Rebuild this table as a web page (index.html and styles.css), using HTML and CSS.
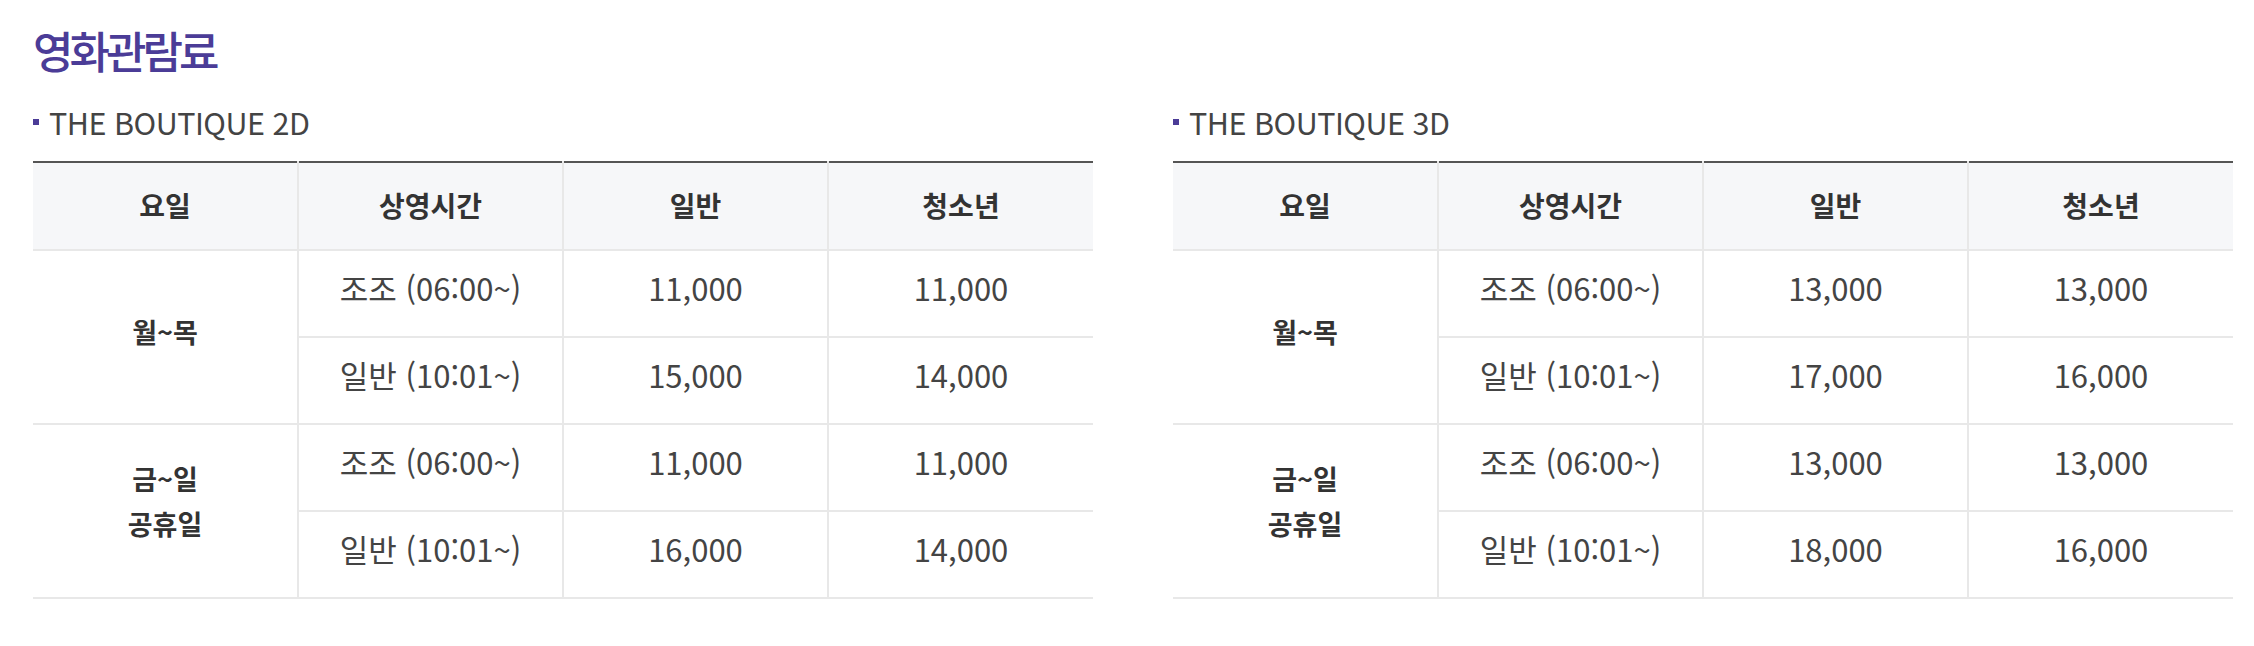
FILE: index.html
```html
<!DOCTYPE html>
<html lang="ko">
<head>
<meta charset="utf-8">
<title>영화관람료</title>
<link rel="stylesheet" href="styles.css">
</head>
<body>
<div class="page">
  <h2 class="title">영화관람료</h2>
  <div class="sections">
    <section class="price-block">
      <h3 class="sub"><span class="dot"></span>THE BOUTIQUE 2D</h3>
      <table class="price">
        <thead>
          <tr><th>요일</th><th>상영시간</th><th>일반</th><th>청소년</th></tr>
        </thead>
        <tbody>
          <tr><td class="day" rowspan="2">월~목</td><td>조조 (06:00~)</td><td>11,000</td><td>11,000</td></tr>
          <tr><td>일반 (10:01~)</td><td>15,000</td><td>14,000</td></tr>
          <tr><td class="day two" rowspan="2">금~일<br>공휴일</td><td>조조 (06:00~)</td><td>11,000</td><td>11,000</td></tr>
          <tr><td>일반 (10:01~)</td><td>16,000</td><td>14,000</td></tr>
        </tbody>
      </table>
    </section>
    <section class="price-block">
      <h3 class="sub"><span class="dot"></span>THE BOUTIQUE 3D</h3>
      <table class="price">
        <thead>
          <tr><th>요일</th><th>상영시간</th><th>일반</th><th>청소년</th></tr>
        </thead>
        <tbody>
          <tr><td class="day" rowspan="2">월~목</td><td>조조 (06:00~)</td><td>13,000</td><td>13,000</td></tr>
          <tr><td>일반 (10:01~)</td><td>17,000</td><td>16,000</td></tr>
          <tr><td class="day two" rowspan="2">금~일<br>공휴일</td><td>조조 (06:00~)</td><td>13,000</td><td>13,000</td></tr>
          <tr><td>일반 (10:01~)</td><td>18,000</td><td>16,000</td></tr>
        </tbody>
      </table>
    </section>
  </div>
</div>
</body>
</html>
```

FILE: styles.css
```css
html, body {
  margin: 0;
  padding: 0;
  background: #fff;
}
body {
  font-family: "Noto Sans CJK KR", "Noto Sans", sans-serif;
  color: #444;
}
.page {
  padding: 20px 0 0 33px;
}
.title {
  margin: 0;
  font-size: 44px;
  line-height: 60px;
  font-weight: 500;
  color: #4b3c97;
  letter-spacing: -4px;
}
.sections {
  display: flex;
  gap: 80px;
  margin-top: 22px;
}
.price-block {
  width: 1060px;
}
.sub {
  display: flex;
  align-items: center;
  margin: 0 0 19px 0;
  font-size: 30.5px;
  line-height: 40px;
  font-weight: 400;
  color: #444;
  letter-spacing: -0.5px;
}
.dot {
  width: 6px;
  height: 6px;
  background: #4b3c97;
  margin-right: 10px;
}
.price {
  width: 100%;
  border-collapse: collapse;
  table-layout: fixed;
  border-top: 2px solid #555;
  font-size: 31px;
}
.price thead tr {
  height: 88px;
}
.price tbody tr {
  height: 87px;
}
.price th, .price td {
  text-align: center;
  vertical-align: middle;
  padding: 0;
  border-bottom: 2px solid #e8e8e8;
  border-left: 2px solid #e8e8e8;
}
.price th:first-child,
.price td.day {
  border-left: none;
}
.price th {
  padding-bottom: 3px;
  background: #f6f7f9;
  font-size: 28px;
  font-weight: 700;
  color: #333;
  line-height: 40px;
}
.price td {
  padding-bottom: 11px;
  color: #444;
  line-height: 40px;
}
.price td.day {
  font-size: 27px;
  font-weight: 700;
  color: #333;
  line-height: 45px;
}
.price td.day.two {
  padding-bottom: 20px;
}
```
